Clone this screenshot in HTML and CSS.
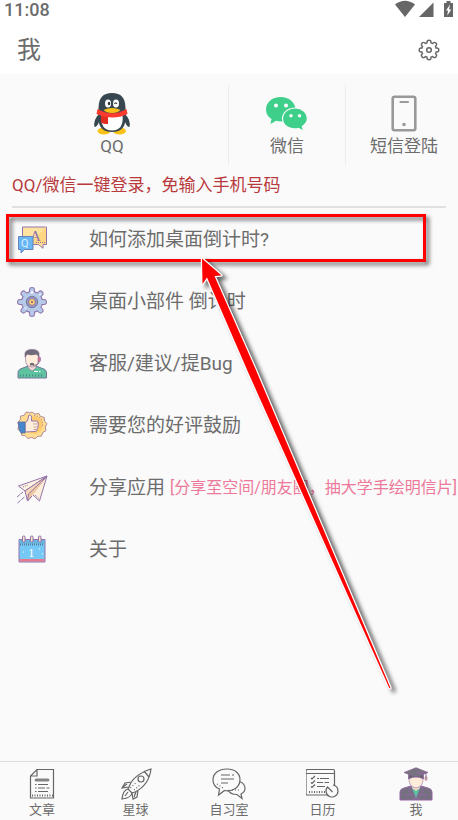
FILE: index.html
```html
<!DOCTYPE html>
<html lang="zh-CN">
<head>
<meta charset="utf-8">
<meta name="viewport" content="width=device-width, initial-scale=1">
<title>我</title>
<link rel="stylesheet" href="styles.css">
</head>
<body>
<div class="app">
  <div class="status">
    <span>11:08</span>
    <svg class="status-icons" width="62" height="20" viewBox="0 0 62 20" fill="#666" aria-hidden="true">
      <path d="M-1 4.500Q9-3 19 4.500L9 17Z"/>
      <path d="M23 17L37.500 2.500V17Z"/>
      <path d="M48 3h2.500V1h4V3H57v14h-9Z"/>
      <path d="M54 4.500l-4 6h2l-.7 5 4-6h-2.200Z" fill="#fff"/>
    </svg>
  </div>
  <header class="header">
    <h1>我</h1>
    <button class="settings" aria-label="设置">
      <svg width="22" height="22" viewBox="0 0 22 22" aria-hidden="true">
        <g stroke="#666" stroke-width="5.400" stroke-linecap="round"><path d="M11 3.200v15.600M3.200 11h15.600M5.500 5.500l11 11M16.500 5.500l-11 11"/></g>
        <circle cx="11" cy="11" r="8" fill="#666"/>
        <g stroke="#fff" stroke-width="2.600" stroke-linecap="round"><path d="M11 3.200v15.600M3.200 11h15.600M5.500 5.500l11 11M16.500 5.500l-11 11"/></g>
        <circle cx="11" cy="11" r="6.700" fill="#fff"/>
        <circle cx="11" cy="11" r="2.300" fill="none" stroke="#666" stroke-width="1.500"/>
      </svg>
    </button>
  </header>

  <main class="main">
    <section class="logins">
      <button class="login login-qq">
        <svg width="38" height="44" viewBox="0 0 38 44" aria-hidden="true">
          <path d="M6 23Q0 29 1.500 36Q4 36 6 31ZM32 23q6 6 4.500 13Q34 36 32 31Z" fill="#37464f"/>
          <ellipse cx="11" cy="40" rx="6.500" ry="3.500" fill="#fbc116"/><ellipse cx="26.500" cy="40" rx="6.500" ry="3.500" fill="#fbc116"/>
          <path d="M5.500 17Q5.500 2 19 2T32.500 17V28Q32 41 19 41T5.500 28Z" fill="#37464f"/>
          <path d="M8.500 24H29.500Q31 39.500 19 39.500T8.500 24Z" fill="#fff"/>
          <ellipse cx="15" cy="12.500" rx="3" ry="4" fill="#fff"/><ellipse cx="23" cy="12.500" rx="3" ry="4" fill="#fff"/>
          <ellipse cx="16" cy="12.500" rx="1.200" ry="1.700" fill="#263238"/><path d="M21.500 13q1-2.500 2.500 0" fill="none" stroke="#263238" stroke-width="1.200"/>
          <path d="M10.500 19Q19 15 27.500 19Q25 22 19 22T10.500 19Z" fill="#fbc116"/>
          <path d="M8 25h7v8Q11 33.500 8 31.500Z" fill="#e02d20"/>
          <path d="M4.500 18Q19 26.500 33.500 18L34.500 23Q20 30 3.500 23Z" fill="#fb3b2d"/>
        </svg>
        <span>QQ</span>
      </button>
      <button class="login">
        <svg width="44" height="44" viewBox="0 0 44 44" aria-hidden="true">
          <path d="M15.500 6C7 6 1 11.500 1 18.700c0 4 2 7 5.500 9.300L5.500 33l5.500-3.200c8 2.500 19.500-1 19.500-11.100C30.500 11.500 24 6 15.500 6Z" fill="#3ecf8a"/>
          <path d="M30.300 17C23 17 17.500 21.700 17.500 27.800c0 7.300 8 11.500 16 9.700l5.300 2.800-1.500-4.800c3-2 5-4.500 5-7.700C42.300 21.700 37 17 30.300 17Z" fill="#3ecf8a" stroke="#fafafa" stroke-width="1.200"/>
          <g fill="#fff"><circle cx="11" cy="14.500" r="2"/><circle cx="21" cy="14.500" r="2"/><circle cx="26" cy="24.700" r="1.700"/><circle cx="34.500" cy="24.700" r="1.700"/></g>
        </svg>
        <span>微信</span>
      </button>
      <button class="login login-sms">
        <svg width="28" height="44" viewBox="0 0 28 44" aria-hidden="true">
          <rect x="2.700" y="5.700" width="22.600" height="33.600" rx="2" fill="none" stroke="#999" stroke-width="2.600"/>
          <path d="M10.500 11h7.500" stroke="#999" stroke-width="2.200" stroke-linecap="round"/><circle cx="14" cy="33.500" r="1.800" fill="#999"/>
        </svg>
        <span>短信登陆</span>
      </button>
    </section>
    <p class="notice">QQ/微信一键登录，免输入手机号码</p>

    <div class="list">
      <a class="row" href="#help">
        <svg width="32" height="32" viewBox="0 0 32 32" aria-hidden="true">
          <path d="M6.500 3h24v17.500H27v3.800L22.500 20.500h-16Z" fill="#fee2a0" stroke="#9273ab"/>
          <path d="M13 20L28 5v-1.500h2V20Z" fill="#ffd782"/>
          <text class="glyph-a" x="14" y="17">A</text><path d="M20 18.500h10" stroke="#9273ab" stroke-dasharray="1 1"/>
          <path d="M2.500 12.500h14.500V25.500H8.500L5 29V25.500H2.500Z" fill="#68b6f3" stroke="#6684ba"/>
          <text class="glyph-q" x="5" y="23">Q</text>
        </svg>
        <span>如何添加桌面倒计时?</span>
      </a>
      <a class="row" href="#widget">
        <svg width="32" height="32" viewBox="0 0 32 32" aria-hidden="true">
          <path d="M16 4v24M4 16h24M7.500 7.500l17 17M24.500 7.500l-17 17" stroke="#9273ab" stroke-width="6" stroke-linecap="round"/>
          <circle cx="16" cy="16" r="11" fill="#9273ab"/>
          <path d="M16 4v24M4 16h24M7.500 7.500l17 17M24.500 7.500l-17 17" stroke="#b5c9e9" stroke-width="4" stroke-linecap="round"/>
          <circle cx="16" cy="16" r="10" fill="#b5c9e9"/>
          <circle cx="16" cy="16" r="5.700" fill="#8e9cc0" stroke="#80739f"/>
          <circle cx="16" cy="16" r="3.400" fill="#ffd06f" stroke="#9273ab"/><circle cx="16" cy="16" r="1" fill="#765d83"/>
          <path d="M16 5v3M14.500 6.500h3M8.500 22h2M23 9l2-1" stroke="#fff"/>
        </svg>
        <span>桌面小部件 倒计时</span>
      </a>
      <a class="row" href="#feedback">
        <svg width="32" height="32" viewBox="0 0 32 32" aria-hidden="true">
          <path d="M2 30v-5q0-4 5-5l5-2h8l5 2q5.500 1 5.500 5v5Z" fill="#5fc3a0" stroke="#72749c"/>
          <path d="M12 16v4l4 3 4-3v-4Z" fill="#f3dfcd" stroke="#9273ab" stroke-width=".7"/>
          <path d="M9.500 6h13v5q0 8-6.500 8T9.500 11Z" fill="#ffecda" stroke="#a788a8" stroke-width=".8"/>
          <path d="M9 9V5Q10 1.500 16 1.500T23 5v4l-2.500-3Q15 8 11.500 6Z" fill="#716b79" stroke="#77647f" stroke-width=".6"/>
          <rect x="22" y="9" width="2.500" height="4.500" rx="1" fill="#dd7186" stroke="#9273ab" stroke-width=".7"/>
          <path d="M23 13q0 5-6 4" fill="none" stroke="#77647f"/><path d="M14 15.500q2-1.500 4 0v2h-4Z" fill="#716b79"/>
          <path d="M4 27.500h24" stroke="#40877c" stroke-width="2" stroke-dasharray="1 2"/><path d="M18 23.500h4M23 23.500h1.500" stroke="#fff"/>
        </svg>
        <span>客服/建议/提Bug</span>
      </a>
      <a class="row" href="#rate">
        <svg width="32" height="32" viewBox="0 0 32 32" aria-hidden="true">
          <path d="M16 2l3 2.200 3.700-.9 1.800 3.200 3.700.8.300 3.700 2.500 2.700L29.300 17l.7 3.700-3.300 1.800-1.200 3.600-3.700.2L19 28.800l-3.500-1.400-3.600 1.200-2.500-2.800-3.700-.6-.7-3.700-3.200-2.200 1-3.600L1.500 12.400l2.800-2.600.2-3.700 3.700-.8L10.200 2l3.700.9Z" fill="#ffdc93" stroke="#a98290" stroke-width=".9"/>
          <circle cx="18" cy="15" r="9" fill="#fdca70"/>
          <path d="M18 5.500q9 1 8.500 10" fill="none" stroke="#9273ab" stroke-dasharray="1 1.800"/>
          <path d="M9 12.500l2-1q1.500-2.500 1.500-6 3-1.500 3 2v3.500h5q2 .2 1.500 2 1 1.500 0 3 .5 1.500-.7 2.500 0 3-2.300 3L9 22Z" fill="#ffeddc" stroke="#9273ab"/>
          <path d="M17 14h4.500M17.500 17h4M17.500 19.500h3" stroke="#b48b91" stroke-width=".7"/>
          <path d="M2.500 12H9V23H5q-2.500-3-2.500-11Z" fill="#4688ce" stroke="#596b9c" stroke-width=".8"/>
        </svg>
        <span>需要您的好评鼓励</span>
      </a>
      <a class="row" href="#share">
        <svg width="32" height="32" viewBox="0 0 32 32" aria-hidden="true" stroke="#9273ab" stroke-linejoin="round">
          <path d="M31 4L2.500 14l6.500 5L31 4Z" fill="#fdf1df"/><path d="M31 4L16 22l7.500 7Z" fill="#fdeeda"/>
          <path d="M31 4L9 19l2.500 10L16 22Z" fill="#f8d8b6"/><path d="M31 4L12.500 22l-1 7 4.500-5" fill="#edc69f"/>
          <path d="M1.500 31l7-6M1 25l3-2.500M4.500 22L7 20" fill="none" stroke-dasharray="4 1"/><path d="M7 15l5-2M19 23l4 3.500" stroke-dasharray="1 1"/>
        </svg>
        <span>分享应用</span><span class="hint">[分享至空间/朋友圈，抽大学手绘明信片]</span>
      </a>
      <a class="row" href="#about">
        <svg width="32" height="32" viewBox="0 0 32 32" aria-hidden="true">
          <path d="M3 5.500h26v22.500H3Z" fill="#75c9f4" stroke="#9273ab"/>
          <path d="M3.500 6h25v3.500h-25Z" fill="#69b3dd"/><path d="M4 10.500h24" stroke="#587b9f" stroke-width="2" stroke-dasharray="1 1"/>
          <path d="M3.500 25h25v2.500h-25Z" fill="#e9788b"/>
          <g fill="#fce5c6" stroke="#9273ab"><rect x="6.500" y="2" width="2.500" height="6" rx="1"/><rect x="14.500" y="2" width="2.500" height="6" rx="1"/><rect x="22.500" y="2" width="2.500" height="6" rx="1"/></g>
          <text class="glyph-one" x="12" y="23">1</text><path d="M7 18h1M23 15h1M26 20h1" stroke="#fff"/>
        </svg>
        <span>关于</span>
      </a>
      <div class="callout"></div>
      <svg class="arrow" width="220" height="450" viewBox="0 0 220 450" aria-hidden="true">
        <path d="M12 10.500L12.500 36l4.500-6.500L58 124l141.500 316.500 1-.5L65.500 121 24.500 28l7-.5Z" fill="#f00" stroke="#fff" stroke-width="2.500" stroke-linejoin="round" paint-order="stroke"/>
      </svg>
    </div>
  </main>

  <nav class="tabs">
    <a href="#articles">
      <svg width="34" height="34" viewBox="0 0 34 34" fill="none" stroke="#666" aria-hidden="true">
        <path d="M12 2.500h16.500V31h-23V9ZM12 2.500V9H5.500" stroke-width="1.200"/><rect x="10" y="12" width="14" height="2" rx="1" fill="#999" stroke-width=".8"/>
        <path d="M10 17.500h1.500M13 17.500h10M10 21h1.500M13 21h7M21.500 21h3M10 24.500h1.500M13 24.500h10"/><path d="M7 28.500h21" stroke-width="2" stroke-dasharray="1 1.500"/>
      </svg><span>文章</span>
    </a>
    <a href="#planet">
      <svg width="34" height="34" viewBox="0 0 34 34" fill="none" stroke="#666" stroke-width="1.200" aria-hidden="true">
        <path d="M10 20Q14 8 32 2Q30 18 16 25L13 26l-4-4ZM25 4l5 6M13 15l-7 1-3 5 7-1M19 23l-1 7-4 2-1-6M9 22q-5 1-6 10 9-1 10-6Z"/><circle cx="22" cy="12" r="3"/>
        <path d="M11.500 21l6-6M15 23l6-5" stroke-dasharray="1 2"/><path d="M4 20l4-3M15 30l2-5M6 29l3-4"/>
      </svg><span>星球</span>
    </a>
    <a href="#study">
      <svg width="34" height="34" viewBox="0 0 34 34" fill="none" stroke="#666" stroke-width="1.200" aria-hidden="true">
        <path d="M15 2C6.500 2 1 6.500 1 12.700 1 17 3.500 20.500 7.500 22L6.500 28l6-4.500C21 25 28 20 28 12.700 28 6.500 23 2 15 2Z"/>
        <path d="M27.500 14.500q5.500 2 5.500 7 0 3.500-4 5.500l1 4.500-5-4q-7 0-9-4.500M9 8h9M20 8h2M9 12h13M9 16h7"/><path d="M5 17l6 4M20 23h8" stroke-dasharray="1 2"/>
      </svg><span>自习室</span>
    </a>
    <a href="#calendar">
      <svg width="34" height="34" viewBox="0 0 34 34" fill="none" stroke="#666" stroke-width="1.200" aria-hidden="true">
        <path d="M22 28H1.500q-1.500 0-1.500-1.500V4q0-1.500 1.500-1.500H27q1.500 0 1.500 1.500V18M0 6.500h28.500M5 11l1 1 3-3M11 11.500h2M14 11.500h9M5 15.500l1 1 3-3M11 15.500h6M18.500 15.500H23M5 19.500l1 1 3-3M11 19.500h8"/>
        <path d="M3 25h17" stroke-width="2" stroke-dasharray="1 1.500"/><path d="M27 18q5 1 5 6a6 6 0 1 1-10-4.500M26.500 25l-5-5"/>
      </svg><span>日历</span>
    </a>
    <a href="#me" aria-current="page">
      <svg width="34" height="34" viewBox="0 0 34 34" aria-hidden="true">
        <path d="M1 33V25q0-3 4-4l7-2h10l7 2q4 1 4 4v8Z" fill="#73717e" stroke="#9565a7"/>
        <path d="M12 19l5 13 5-13Z" fill="#55c2a0" stroke="#9565a7" stroke-width=".7"/>
        <path d="M13 16h8v5l-4 3-4-3Z" fill="#f4dcc2"/><path d="M10 8h14v4q0 8-7 9-7-1-7-9Z" fill="#ffecda" stroke="#a990ad" stroke-width=".8"/>
        <path d="M9.500 7v5Q17 8 24.500 12V7Z" fill="#66636f" stroke="#9565a7" stroke-width=".7"/><path d="M17 .8L29 5.500 17 10 5 5.500Z" fill="#77737e" stroke="#886a96" stroke-width=".8"/>
        <path d="M17 5.500l10 1v5" fill="none" stroke="#9565a7"/><ellipse cx="27" cy="11.500" rx="1" ry="2" fill="#efbf73" stroke="#9565a7" stroke-width=".7"/>
        <path d="M11 20l-1 4 6 8M23 20l1 4-6 8M4 28h8M22 28h8" fill="none" stroke="#9565a7"/>
      </svg><span>我</span>
    </a>
  </nav>
</div>
</body>
</html>
```

FILE: styles.css
```css
* {
  box-sizing: border-box;
}

body {
  margin: 0;
  background: #fafafa;
  color: #6c6c6c;
  font-family: Roboto, "Noto Sans CJK SC", sans-serif;
}

.app {
  display: flex;
  flex-direction: column;
  min-height: 100vh;
  overflow: hidden;
}

a {
  color: inherit;
  text-decoration: none;
}

button {
  padding: 0;
  border: 0;
  background: none;
  color: inherit;
  font: inherit;
}

svg {
  display: block;
  flex: none;
}

.status {
  display: flex;
  justify-content: space-between;
  height: 24px;
  padding-left: 4px;
  background: #fff;
  font-size: 18px;
  font-weight: 500;
  line-height: 20px;
}

.status-icons {
  overflow: visible;
}

.header {
  display: flex;
  align-items: center;
  justify-content: space-between;
  height: 51px;
  padding: 1px 18px 0 17px;
  border-bottom: 1px solid #f8f8f8;
  background: #fff;
}

.header h1 {
  margin: 0;
  font-size: 24px;
  font-weight: 400;
  line-height: 48px;
}

.main {
  flex: 1;
}

.logins {
  display: grid;
  grid-template-columns: 228fr 117fr 113fr;
  padding-top: 10px;
}

.login {
  display: flex;
  flex-direction: column;
  align-items: center;
  height: 80px;
  padding-top: 6px;
  font-size: 17px;
  line-height: 24px;
}

.login + .login {
  border-left: 1px solid #ececec;
}

.login svg {
  margin-bottom: -1px;
}

.login-qq {
  padding-right: 4px;
}

.login-sms {
  padding-left: 4px;
}

.notice {
  margin: 0 12px;
  padding: 8px 0 9px;
  border-bottom: 2px solid #e0e0e0;
  color: #b93a3d;
  font-size: 17px;
  line-height: 24px;
}

.list {
  position: relative;
  padding-top: 1px;
}

.row {
  display: flex;
  align-items: center;
  height: 62px;
  padding-left: 16px;
  font-size: 19px;
  line-height: 28px;
  white-space: nowrap;
}

.row svg {
  margin-right: 41px;
}

.hint {
  margin-left: 5px;
  color: #ed7899;
  font-size: 16px;
}

.glyph-a {
  fill: #9273ab;
  font-family: "Liberation Serif", serif;
  font-size: 15px;
}

.glyph-q {
  fill: #d8efff;
  font-size: 11px;
}

.glyph-one {
  fill: #fff;
  font-family: "Liberation Serif", serif;
  font-size: 13px;
}

.callout {
  position: absolute;
  top: 6px;
  right: 32px;
  left: 6px;
  height: 48px;
  border: 3px solid #f00;
  filter: drop-shadow(3px 3px 2px rgb(0 0 0 / 60%));
  pointer-events: none;
}

.arrow {
  position: absolute;
  top: 40px;
  left: 190px;
  overflow: visible;
  filter: drop-shadow(4px 3px 2px rgb(0 0 0 / 60%));
  pointer-events: none;
}

.tabs {
  display: flex;
  justify-content: space-between;
  height: 59px;
  border-top: 1px solid #ddd;
}

.tabs a {
  display: flex;
  flex-direction: column;
  align-items: center;
  width: 84px;
  padding-top: 5px;
  font-size: 13px;
  line-height: 18px;
}
```
